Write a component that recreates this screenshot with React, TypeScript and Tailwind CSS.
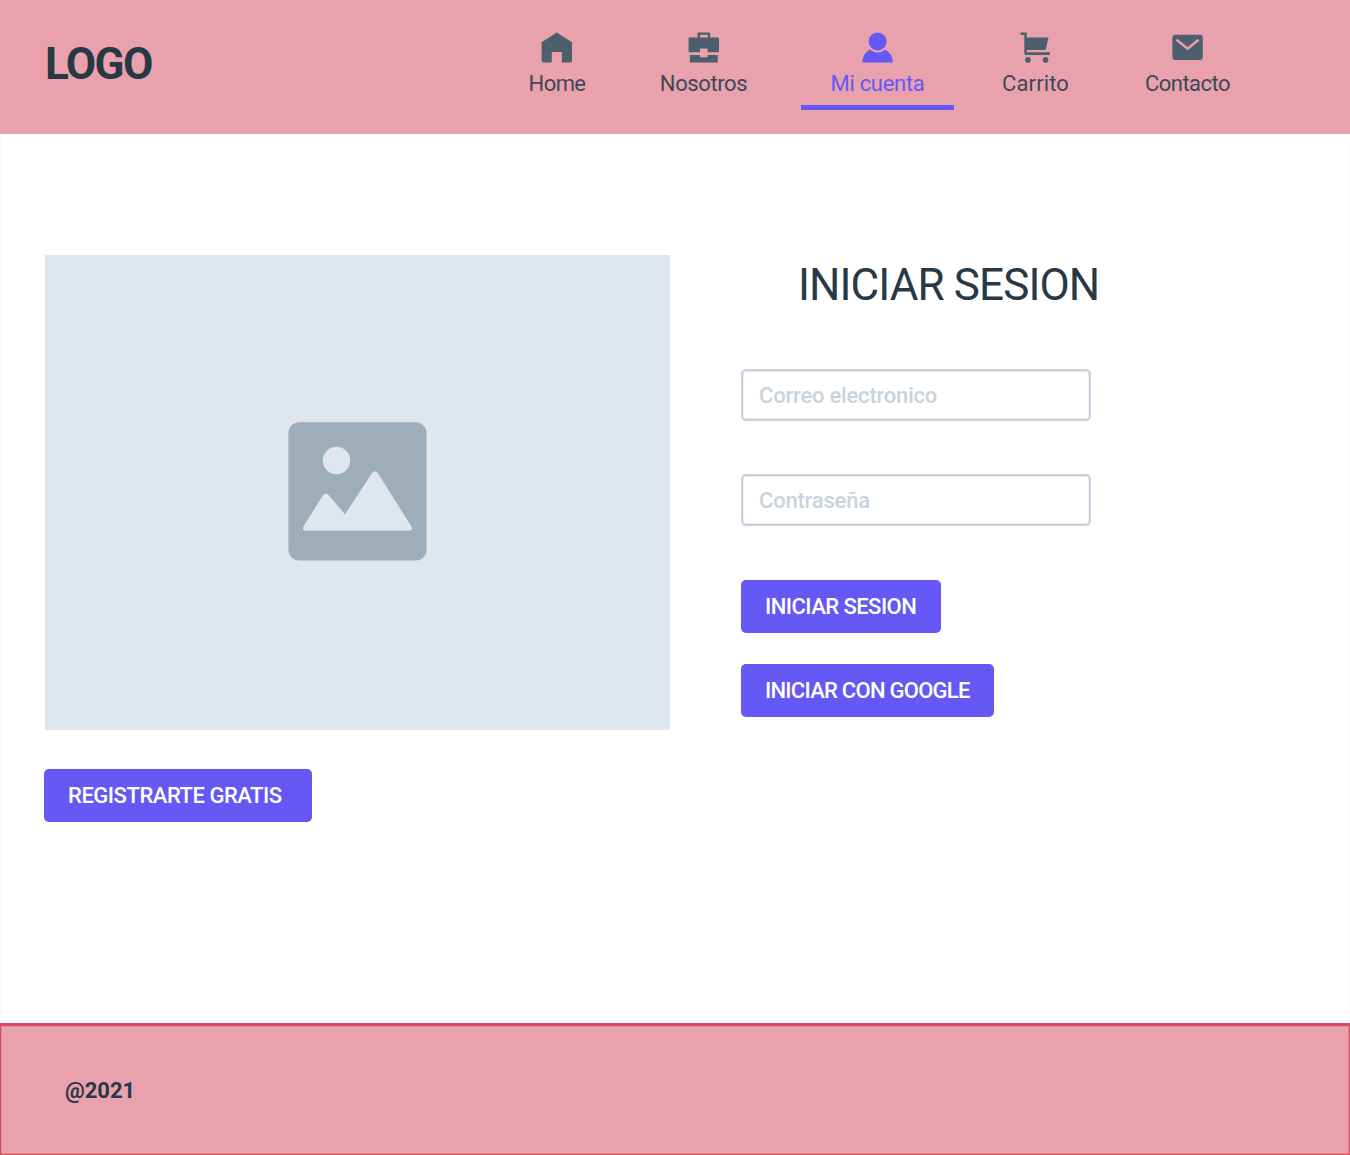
import type { ReactNode } from "react";

const HomeIcon = () => (
  <svg className="block h-8 w-8" viewBox="0.2 0.3 32 32" fill="currentColor">
    <path d="M16 .8 31.2 10.6V29q0 1.8-1.8 1.8H21V20.3H11V30.8H2.6Q.8 30.8.8 29V10.6Z" />
  </svg>
);

const BriefcaseIcon = () => (
  <svg className="block h-8 w-8" viewBox="0.2 0.3 32 32" fill="currentColor">
    <path d="M9.8 5.7V.7H22.4V5.7H29.8Q31.2 5.7 31.2 7V20.6H19.8V16.8H12.2V20.6H.8V7Q.8 5.7 2.2 5.7ZM12.2 5.7H20V3H12.2Z" />
    <path d="M2.1 23.3H12.2V25.5H19.8V23.3H29.9V30.8H2.1Z" />
  </svg>
);

const UserIcon = () => (
  <svg className="block h-8 w-8" viewBox="0.4 0.3 32 32" fill="currentColor">
    <circle cx="16" cy="9.7" r="9" />
    <path d="M8.2 17.8Q16 24.2 23.8 17.8C28.6 20.6 31.2 25.4 31.2 30.8H.8C.8 25.4 3.4 20.6 8.2 17.8Z" />
  </svg>
);

const CartIcon = () => (
  <svg className="block h-8 w-8" viewBox="0.2 0.3 32 32" fill="currentColor">
    <path d="M.8.7H7V5.8H28.7L25.8 18.4H7V20.6H30.2V23.2H6.2Q4.5 23.2 4.5 21.5V3.2H.8Z" />
    <circle cx="8.1" cy="28.2" r="2.8" />
    <circle cx="25.7" cy="28.2" r="2.8" />
  </svg>
);

const MailIcon = () => (
  <svg className="block h-8 w-8" viewBox="0.4 0.3 32 32">
    <rect x=".8" y="3" width="30.4" height="25.3" rx="3" fill="currentColor" />
    <path d="m5 8 11 9 11-9" fill="none" stroke="#e9a2ad" strokeWidth="2.4" />
  </svg>
);

const NavItem = ({
  icon,
  label,
  className,
  active = false,
}: {
  icon: ReactNode;
  label: string;
  className: string;
  active?: boolean;
}) => (
  <a
    className={`flex h-[78px] flex-col items-center border-b-[5px] ${
      active ? "border-[#6558f5] text-[#6558f5]" : "border-transparent text-[#4d5f6d]"
    } ${className}`}
  >
    {icon}
    <span
      className={`mt-[5px] whitespace-nowrap text-[22px] leading-[30px] ${
        active ? "" : "text-[#3f4756]"
      }`}
    >
      {label}
    </span>
  </a>
);

const Button = ({ children, className }: { children: ReactNode; className: string }) => (
  <button
    className={`flex h-[53px] items-center whitespace-nowrap rounded-[5px] bg-[#6558f5] pl-6 text-[22px] font-medium text-white ${className}`}
  >
    {children}
  </button>
);

const Field = ({ placeholder, type, className }: { placeholder: string; type: string; className: string }) => (
  <input
    type={type}
    placeholder={placeholder}
    className={`block h-[52px] w-[350px] rounded-[5px] border-2 border-[#c8d2dd] bg-white px-4 pt-0.5 text-[22px] font-medium tracking-[-0.2px] shadow-[inset_0_0_0_1px_#e6ebf0] placeholder:text-[#c8d3de] placeholder:opacity-100 ${className}`}
  />
);

export default function App() {
  return (
    <div className="flex h-[1155px] w-[1350px] flex-col bg-white font-['Roboto',sans-serif] text-[#293845]">
      <header className="flex h-[134.4px] shrink-0 items-start bg-[#e9a2ad]">
        <div className="ml-[45px] mt-[38px] w-[454px] text-[44px] font-bold leading-[52px] tracking-[-1.6px]">
          LOGO
        </div>
        <nav className="mt-8 flex">
          <NavItem icon={<HomeIcon />} label="Home" className="w-[116px] tracking-[-0.6px]" />
          <NavItem icon={<BriefcaseIcon />} label="Nosotros" className="ml-[15px] w-[147px] tracking-[-0.4px]" />
          <NavItem icon={<UserIcon />} label="Mi cuenta" className="ml-6 w-[153px] tracking-[-0.3px]" active />
          <NavItem icon={<CartIcon />} label="Carrito" className="ml-[18px] w-[127px] tracking-[0.1px]" />
          <NavItem icon={<MailIcon />} label="Contacto" className="ml-4 w-[145px] tracking-[-0.5px]" />
        </nav>
      </header>

      <main className="flex flex-1 items-start border-x border-[#fafafa] pl-[43px]">
        <section className="mt-[120.6px] w-[627px]">
          <div className="ml-px flex h-[475px] w-[625px] items-center justify-center bg-[#dfe6ee] pb-px">
            <svg className="h-[139px] w-[139px]" viewBox="0 0 139 139">
              <rect x=".4" y=".3" width="138.2" height="138.2" rx="11" fill="#9eadba" />
              <g fill="#dfe6ee">
                <circle cx="48.5" cy="38.5" r="13.7" />
                <path d="M15.6 104.2 34.8 73.5Q37.4 69.7 40.5 72.9L57 92.3 83.8 51.5Q87 47.1 90 51.5L123.3 104.2Q125.5 108.4 121 108.8H18Q13.5 108.4 15.6 104.2Z" />
              </g>
            </svg>
          </div>
          <Button className="mt-[39px] w-[268px] tracking-[-0.47px]">REGISTRARTE GRATIS</Button>
        </section>
        <section className="ml-[70px] mt-[124.6px]">
          <h1 className="ml-[57px] whitespace-nowrap text-[44px] leading-[52px] tracking-[-0.9px]">
            INICIAR SESION
          </h1>
          <Field type="email" placeholder="Correo electronico" className="mt-[58px]" />
          <Field type="password" placeholder="Contraseña" className="mt-[53px]" />
          <Button className="mt-[54px] w-[200px] tracking-[-0.54px]">INICIAR SESION</Button>
          <Button className="mt-[31px] w-[253px] tracking-[-0.74px]">INICIAR CON GOOGLE</Button>
        </section>
      </main>

      <footer className="flex h-[132px] shrink-0 items-center border border-t-[3px] border-[#d94a60] bg-[#e9a2ad] pl-16 text-[22px] font-bold shadow-[inset_0_0_0_1px_#e48b9a]">
        @2021
      </footer>
    </div>
  );
}
